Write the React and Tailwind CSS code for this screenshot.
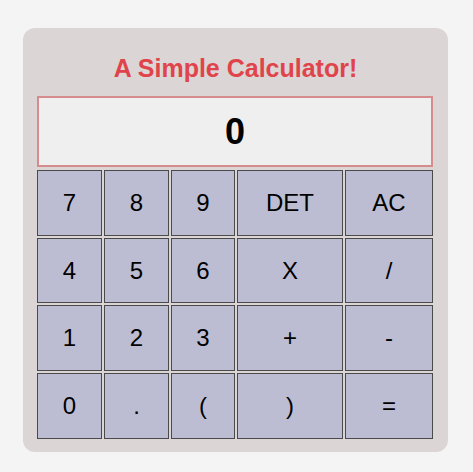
const keys = [
    '7', '8', '9', 'DET', 'AC',
    '4', '5', '6', 'X', '/',
    '1', '2', '3', '+', '-',
    '0', '.', '(', ')', '=',
];

const App = () => {
    return (
        <div className="min-h-screen bg-[#f4f4f4] pt-[28px] pl-[23px] font-['Liberation_Sans',Arial,sans-serif]">
            <div className="w-[425px] h-[424px] rounded-[12px] bg-[#dbd5d5] pt-[26px] px-[14px]">
                <h1 className="text-center text-[25px] leading-[28px] font-bold text-[#e0444a]">A Simple Calculator!</h1>

                {/* Display */}
                <div className="mt-[14px] h-[71px] w-[396px] border-2 border-[#d68b8d] bg-[#efefef] flex items-center justify-center">
                    <span className="text-[36px] font-bold text-black">0</span>
                </div>

                {/* Keypad */}
                <div className="mt-[3px] grid grid-cols-[65px_65px_64px_106px_88px] grid-rows-[repeat(4,65.7px)] gap-[2px]">
                    {keys.map((k) => (
                        <button key={k} className="border border-[#4a4a4a] bg-[#bcbdd3] text-[24px] text-black flex items-center justify-center">
                            {k}
                        </button>
                    ))}
                </div>
            </div>
        </div>
    );
};

export default App;
